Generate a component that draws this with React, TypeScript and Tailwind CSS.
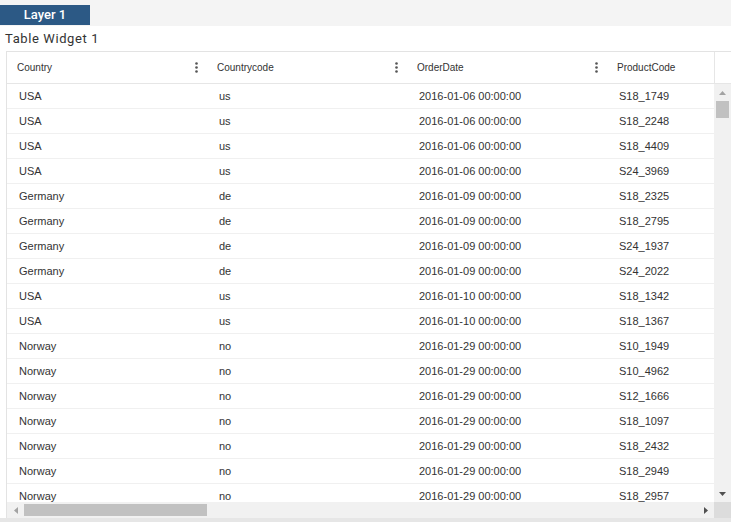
import React from "react";

const rows: [string, string, string, string][] = [
  ["USA", "us", "2016-01-06 00:00:00", "S18_1749"],
  ["USA", "us", "2016-01-06 00:00:00", "S18_2248"],
  ["USA", "us", "2016-01-06 00:00:00", "S18_4409"],
  ["USA", "us", "2016-01-06 00:00:00", "S24_3969"],
  ["Germany", "de", "2016-01-09 00:00:00", "S18_2325"],
  ["Germany", "de", "2016-01-09 00:00:00", "S18_2795"],
  ["Germany", "de", "2016-01-09 00:00:00", "S24_1937"],
  ["Germany", "de", "2016-01-09 00:00:00", "S24_2022"],
  ["USA", "us", "2016-01-10 00:00:00", "S18_1342"],
  ["USA", "us", "2016-01-10 00:00:00", "S18_1367"],
  ["Norway", "no", "2016-01-29 00:00:00", "S10_1949"],
  ["Norway", "no", "2016-01-29 00:00:00", "S10_4962"],
  ["Norway", "no", "2016-01-29 00:00:00", "S12_1666"],
  ["Norway", "no", "2016-01-29 00:00:00", "S18_1097"],
  ["Norway", "no", "2016-01-29 00:00:00", "S18_2432"],
  ["Norway", "no", "2016-01-29 00:00:00", "S18_2949"],
  ["Norway", "no", "2016-01-29 00:00:00", "S18_2957"],
];

const columns = ["Country", "Countrycode", "OrderDate", "ProductCode"];

function Dots() {
  return (
    <svg width="3" height="11" viewBox="0 0 3 11" className="shrink-0">
      <circle cx="1.5" cy="1.5" r="1.3" fill="#555" />
      <circle cx="1.5" cy="5.5" r="1.3" fill="#555" />
      <circle cx="1.5" cy="9.5" r="1.3" fill="#555" />
    </svg>
  );
}

export default function App() {
  return (
    <div
      className="flex h-[522px] w-[731px] flex-col overflow-hidden bg-white text-[#333]"
      style={{ fontFamily: '"Liberation Sans", Arial, sans-serif' }}
    >
      {/* Layer tabs */}
      <div className="flex h-[26px] shrink-0 items-end bg-[#f4f4f4] pb-px">
        <div
          className="flex h-[20px] w-[90px] items-center justify-center bg-[#2c5985] text-[13px] font-medium text-white"
          style={{ fontFamily: 'Roboto, "Liberation Sans", sans-serif' }}
        >
          Layer 1
        </div>
      </div>

      <div
        className="h-[25px] shrink-0 pl-[5px] pt-[3px] text-[13px] tracking-[0.6px] text-[#333]"
        style={{ fontFamily: 'Roboto, "Liberation Sans", sans-serif' }}
      >
        Table Widget 1
      </div>

      {/* Table */}
      <div className="ml-[6px] flex min-h-0 flex-1 flex-col border-l border-t border-[#e3e3e3]">
        {/* Header */}
        <div className="flex h-[32px] shrink-0 border-b border-[#e6e6e6]">
          {columns.map((c) => (
            <div key={c} className="flex w-[200px] shrink-0 items-center justify-between pl-[10px] pr-[9px] text-[10px] text-[#333]">
              <span>{c}</span>
              {c !== "ProductCode" && <Dots />}
            </div>
          ))}
          <div className="flex-1 border-l border-[#e6e6e6]" style={{ marginLeft: -93 }} />
        </div>

        <div className="flex min-h-0 flex-1">
          {/* body */}
          <div className="min-w-0 flex-1 overflow-hidden">
            {rows.map((r, i) => (
              <div key={i} className="flex h-[25px] border-b border-[#f0f0f0]">
                {r.map((v, j) => (
                  <div key={j} className="flex w-[200px] shrink-0 items-center pl-[12px] text-[11px] text-[#333]">
                    {v}
                  </div>
                ))}
              </div>
            ))}
          </div>
          {/* vertical scrollbar */}
          <div className="flex w-[17px] shrink-0 flex-col bg-[#f1f1f1]">
            <div className="flex h-[17px] items-center justify-center">
              <svg width="7" height="4" viewBox="0 0 7 4"><path d="M0 4 L3.5 0 L7 4 Z" fill="#a3a3a3" /></svg>
            </div>
            <div className="mx-[2px] h-[17px] bg-[#c1c1c1]" />
            <div className="flex-1" />
            <div className="flex h-[17px] items-center justify-center">
              <svg width="7" height="4" viewBox="0 0 7 4"><path d="M0 0 L3.5 4 L7 0 Z" fill="#505050" /></svg>
            </div>
          </div>
        </div>

        {/* horizontal scrollbar */}
        <div className="flex h-[16px] shrink-0">
          <div className="flex flex-1 items-center bg-[#f1f1f1]">
            <div className="flex w-[17px] items-center justify-center">
              <svg width="4" height="7" viewBox="0 0 4 7"><path d="M4 0 L0 3.5 L4 7 Z" fill="#a3a3a3" /></svg>
            </div>
            <div className="h-[12px] w-[183px] bg-[#c1c1c1]" />
            <div className="flex-1" />
            <div className="flex w-[17px] items-center justify-center">
              <svg width="4" height="7" viewBox="0 0 4 7"><path d="M0 0 L4 3.5 L0 7 Z" fill="#505050" /></svg>
            </div>
          </div>
          <div className="w-[17px] bg-[#dcdcdc]" />
        </div>
      </div>
      <div className="h-[4px] shrink-0 bg-[#e6e6e6]" />
    </div>
  );
}
